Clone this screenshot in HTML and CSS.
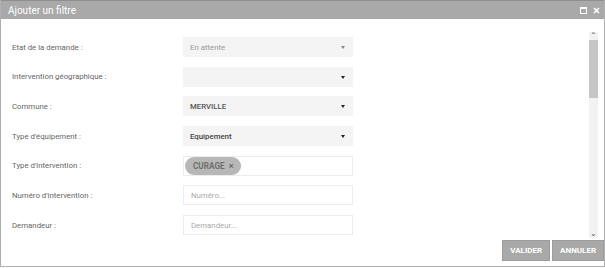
FILE: index.html
```html
<!DOCTYPE html>
<html lang="fr">
<head>
    <meta charset="UTF-8">
    <title>Ajouter un filtre</title>
    <link rel="stylesheet" href="styles.css">
</head>
<body>
    <div class="dialog">
        <div class="titlebar">
            <span class="title">Ajouter un filtre</span>
            <span class="tools">
                <svg width="7" height="7" viewBox="0 0 7 7"><rect x="0.5" y="0.5" width="6" height="6" fill="none" stroke="#fff"/><rect x="0" y="0" width="7" height="2" fill="#fff"/></svg>
                <svg width="7" height="7" viewBox="0 0 7 7"><path d="M1 1L6 6M6 1L1 6" stroke="#fff" stroke-width="1.6"/></svg>
            </span>
        </div>
        <div class="content">
            <div class="fields">
                <div class="row">
                    <label>Etat de la demande :</label>
                    <div class="select disabled">En attente<span class="caret"></span></div>
                </div>
                <div class="row">
                    <label>Intervention géographique :</label>
                    <div class="select"><span class="caret"></span></div>
                </div>
                <div class="row">
                    <label>Commune :</label>
                    <div class="select">MERVILLE<span class="caret"></span></div>
                </div>
                <div class="row">
                    <label>Type d'équipement :</label>
                    <div class="select strong">Equipement<span class="caret"></span></div>
                </div>
                <div class="row">
                    <label>Type d'intervention :</label>
                    <div class="input"><span class="chip">CURAGE <b>×</b></span></div>
                </div>
                <div class="row">
                    <label>Numéro d'intervention :</label>
                    <div class="input placeholder">Numéro...</div>
                </div>
                <div class="row">
                    <label>Demandeur :</label>
                    <div class="input placeholder">Demandeur...</div>
                </div>
            </div>
            <div class="scrollbar">
                <span class="arrow">&#8963;</span>
                <div class="track"><div class="thumb"></div></div>
                <span class="arrow">&#8964;</span>
            </div>
        </div>
        <div class="actions">
            <button>VALIDER</button>
            <button>ANNULER</button>
        </div>
    </div>
</body>
</html>
```
FILE: styles.css
```css
body { margin: 0; font-family: Roboto, "Noto Sans", sans-serif; background: #fff; }
.dialog { width: 603px; height: 266px; border: 1px solid #b0b0b0; border-top: 0; display: flex; flex-direction: column; }
.titlebar { height: 19px; background: #a9a9a9; border-top: 1px solid #8f8f8f; display: flex; align-items: center; justify-content: space-between; padding: 0 4px 0 7px; }
.title { color: #fff; font-size: 10px; }
.tools { display: flex; gap: 6px; }
.content { flex: 1; display: flex; justify-content: space-between; padding: 18px 6px 0 11px; }
.fields { display: flex; flex-direction: column; gap: 9.7px; }
.row { display: flex; align-items: center; height: 20px; }
.row label { width: 171px; font-size: 7.8px; color: #666; }
.select, .input { width: 170px; height: 20px; box-sizing: border-box; display: flex; align-items: center; padding: 0 7px; font-size: 7.8px; position: relative; }
.select { background: #f4f4f4; color: #555; font-weight: 500; }
.select.disabled { color: #999; font-weight: 400; }
.select.strong { color: #444; }
.caret { position: absolute; right: 8px; top: 9px; border-left: 2.5px solid transparent; border-right: 2.5px solid transparent; border-top: 3px solid #222; }
.disabled .caret { border-top-color: #888; }
.input { background: #fff; border: 1px solid #ececec; }
.placeholder { color: #aaa; }
.chip { background: #b7b7b7; color: #6f6f6f; font-weight: 700; font-size: 8.2px; border-radius: 9px; padding: 4px 8px; margin-left: -6px; }
.chip b { font-size: 9px; margin-left: 2px; }
.scrollbar { width: 9px; display: flex; flex-direction: column; align-items: center; background: #f2f2f2; margin-top: -5px; height: 206px; }
.arrow { font-size: 8px; line-height: 8px; color: #555; height: 8px; }
.track { flex: 1; width: 9px; }
.thumb { height: 58px; background: #c6c6c6; }
.actions { display: flex; justify-content: flex-end; gap: 2px; padding: 0 0 5px; margin-top: 2px; }
.actions button { background: #a9a9a9; color: #fff; border: 1px solid #9c9c9c; font-family: Roboto, sans-serif; font-weight: 700; font-size: 8px; height: 21px; padding: 0 7px; }
```
